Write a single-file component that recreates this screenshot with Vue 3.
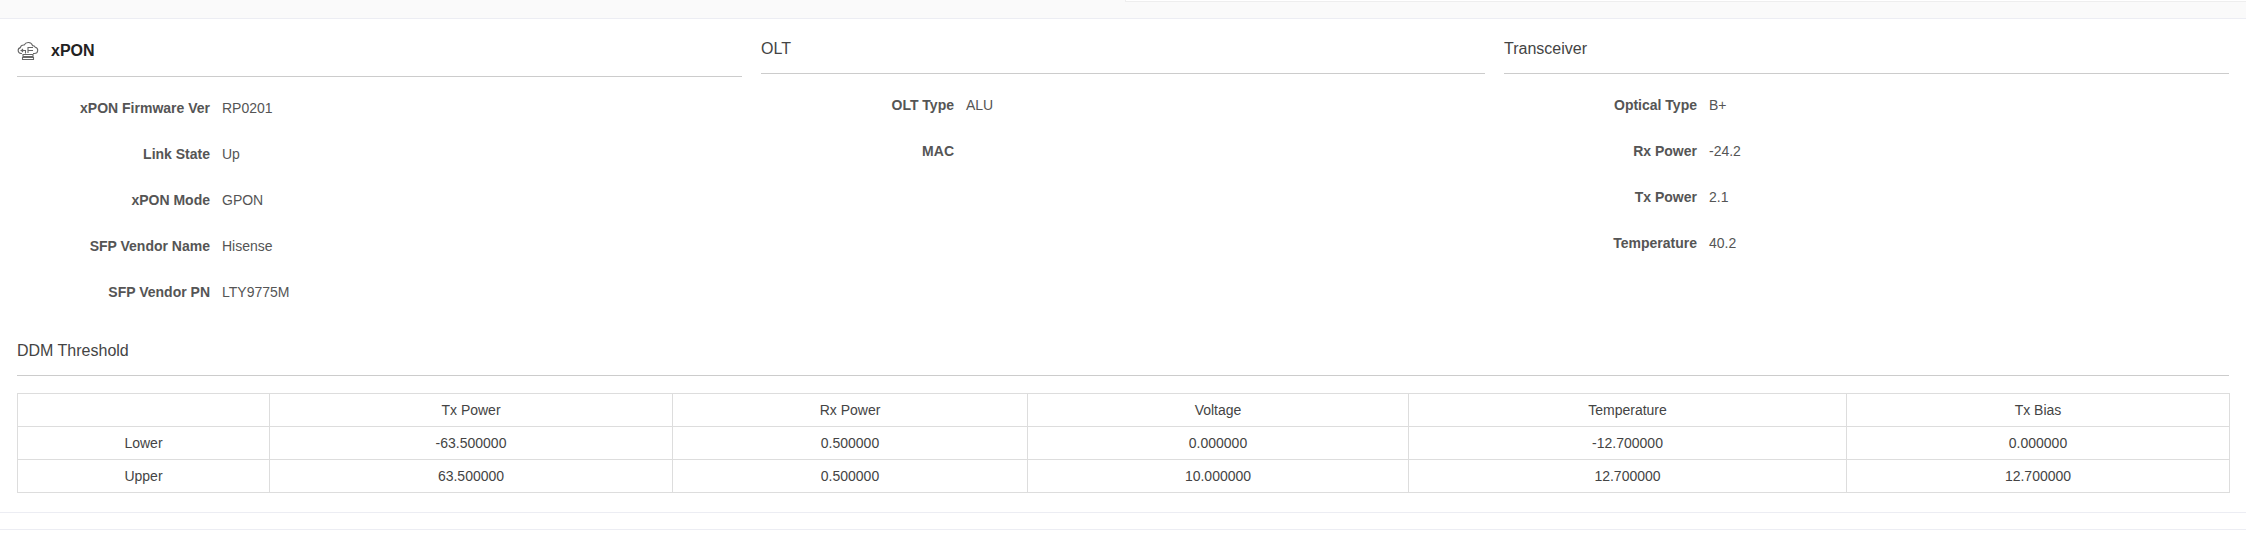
<script setup>
const xpon = [
  ['xPON Firmware Ver', 'RP0201'],
  ['Link State', 'Up'],
  ['xPON Mode', 'GPON'],
  ['SFP Vendor Name', 'Hisense'],
  ['SFP Vendor PN', 'LTY9775M'],
]
const olt = [['OLT Type', 'ALU'], ['MAC', '']]
const trans = [
  ['Optical Type', 'B+'],
  ['Rx Power', '-24.2'],
  ['Tx Power', '2.1'],
  ['Temperature', '40.2'],
]
const cols = [252, 403, 355, 381, 438, 383]
const head = ['', 'Tx Power', 'Rx Power', 'Voltage', 'Temperature', 'Tx Bias']
const rows = [
  ['Lower', '-63.500000', '0.500000', '0.000000', '-12.700000', '0.000000'],
  ['Upper', '63.500000', '0.500000', '10.000000', '12.700000', '12.700000'],
]
</script>

<template>
  <div class="page">
    <div class="top"><div class="top-card"></div></div>
    <div class="main">
      <div class="columns">
        <section>
          <h2 class="title strong">
            <svg class="icon" width="22" height="20" viewBox="0 0 22 20" fill="none" stroke="#666" stroke-width="1.1">
              <path d="M5 12.5H4a3 3 0 0 1-.6-5.9A3.2 3.2 0 0 1 7.2 4a4.6 4.6 0 0 1 8.4.6 3.1 3.1 0 0 1 2.7 1.6 3.2 3.2 0 0 1-.8 6.3H16" />
              <path d="M3.5 9.5h5v3M6 8l-1.5 1.5L6 11M11 12V6.5h5M11 9.5h5" />
              <path d="M6 13.5h10v2H6zM5.5 16.5h11v2h-11z" />
            </svg>
            xPON
          </h2>
          <div class="rows">
            <div v-for="r in xpon" :key="r[0]" class="row"><label>{{ r[0] }}</label><span>{{ r[1] }}</span></div>
          </div>
        </section>
        <section>
          <h2 class="title">OLT</h2>
          <div class="rows">
            <div v-for="r in olt" :key="r[0]" class="row"><label>{{ r[0] }}</label><span>{{ r[1] }}</span></div>
          </div>
        </section>
        <section>
          <h2 class="title">Transceiver</h2>
          <div class="rows">
            <div v-for="r in trans" :key="r[0]" class="row"><label>{{ r[0] }}</label><span>{{ r[1] }}</span></div>
          </div>
        </section>
      </div>
      <h2 class="title ddm">DDM Threshold</h2>
      <table>
        <colgroup><col v-for="(c, i) in cols" :key="i" :style="{ width: c + 'px' }" /></colgroup>
        <thead><tr><th v-for="(h, i) in head" :key="i">{{ h }}</th></tr></thead>
        <tbody>
          <tr v-for="r in rows" :key="r[0]"><td v-for="(c, i) in r" :key="i">{{ c }}</td></tr>
        </tbody>
      </table>
    </div>
    <div class="strip"></div>
  </div>
</template>

<style scoped>
.page {
  width: 2246px;
  height: 548px;
  background: #fff;
  font-family: "Liberation Sans", Arial, sans-serif;
  font-size: 14px;
  color: #555;
  overflow: hidden;
}
.top {
  height: 18px;
  background: #fafafa;
  border-bottom: 1px solid #ecedf3;
  padding-left: 1125px;
}
.top-card {
  height: 1px;
  background: #fff;
  border-bottom: 1px solid #eee;
  border-left: 1px solid #eee;
}
.main {
  padding: 0 17px;
  height: 494px;
  box-sizing: border-box;
  border-bottom: 1px solid #ecedf3;
}
.columns {
  display: grid;
  grid-template-columns: 725px 724px 725px;
  gap: 19px;
  height: 314px;
}
.title {
  margin: 0;
  height: 54px;
  line-height: 60px;
  font-size: 16px;
  font-weight: 400;
  color: #444;
  border-bottom: 1px solid #ccc;
}
.title.strong {
  height: 51px;
  padding-top: 6px;
  line-height: 20px;
  font-weight: 700;
  color: #222;
  display: flex;
  align-items: center;
}
.icon {
  margin-right: 12px;
}
.rows {
  padding-top: 14px;
}
.row {
  display: flex;
  height: 46px;
  line-height: 34px;
}
.row label {
  width: 193px;
  text-align: right;
  font-weight: 700;
  color: #555;
  margin-right: 12px;
}
.title.ddm {
  height: 42px;
  line-height: 36px;
  margin-bottom: 17px;
}
table {
  width: 2212px;
  table-layout: fixed;
  border-collapse: collapse;
}
th, td {
  height: 33px;
  padding: 0;
  box-sizing: border-box;
  border: 1px solid #ddd;
  text-align: center;
  font-weight: 400;
  color: #444;
}
.strip {
  height: 16px;
  border-bottom: 1px solid #ecedf3;
}
</style>
